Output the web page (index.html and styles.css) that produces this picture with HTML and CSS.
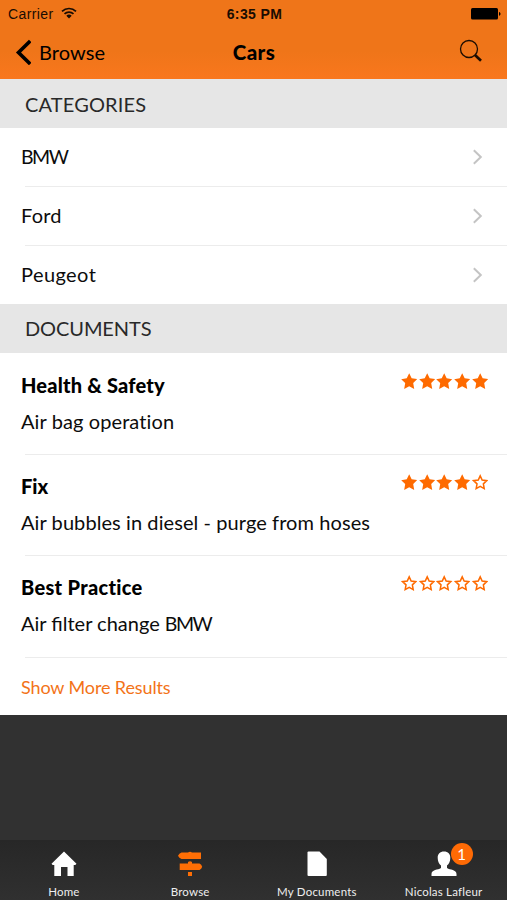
FILE: index.html
```html
<!DOCTYPE html>
<html lang="en">
<head>
<meta charset="utf-8">
<title>Cars</title>
<link rel="stylesheet" href="styles.css">
</head>
<body>
<svg class="defs" width="0" height="0" aria-hidden="true">
  <defs>
    <path id="star" d="M8 .3 10.400 5.200 15.800 6 11.900 9.800 12.900 15.600 8 13 3.100 15.600 4.100 9.800 .2 6 5.600 5.200Z"/>
    <path id="star-outline" d="M8 1.800 9.900 5.900 14.400 6.500 11.100 9.600 11.900 14.200 8 12 4.100 14.200 4.900 9.600 1.600 6.500 6.100 5.900Z"/>
    <path id="chevron" d="M.8 1.300 7.800 8 .8 14.700"/>
  </defs>
</svg>
<div class="app">
  <header class="top">
    <div class="status">
      <span class="carrier">Carrier
        <svg class="wifi" width="16" height="12" viewBox="0 0 16 12"><path d="M1 4.3A10.2 10.2 0 0 1 15 4.3M3.5 6.9A6.5 6.5 0 0 1 12.5 6.9" fill="none" stroke="#190c02" stroke-width="1.7"/><path d="M8 11.5 5.3 8.8A4 4 0 0 1 10.7 8.8Z" fill="#190c02"/></svg>
      </span>
      <span class="time">6:35 PM</span>
      <svg class="battery" width="30" height="12" viewBox="0 0 30 12"><rect width="27" height="11.5" rx="1.5"/><path d="M28 4C30 4.5 30 7.300 28 7.800Z"/></svg>
    </div>
    <nav class="nav">
      <a class="back"><svg width="17" height="26" viewBox="0 0 17 26"><path d="M16.200 2 4.500 13.500 16.200 25" fill="none" stroke="#000" stroke-width="3.600"/></svg><span class="back-text">Browse</span></a>
      <h1 class="title">Cars</h1>
      <svg class="search" width="24" height="24" viewBox="0 0 24 24" fill="none" stroke="#1c0d02"><circle cx="10" cy="10" r="8.500" stroke-width="1.300"/><path d="M16 16 22 21.700" stroke-width="2.700"/></svg>
    </nav>
  </header>
  <main>
    <h2 class="section"><span class="t-cat">CATEGORIES</span></h2>
    <ul class="list">
      <li class="row"><span class="t-bmw">BMW</span><svg class="chev" width="10" height="16"><use href="#chevron"/></svg></li>
      <li class="row"><span class="t-ford">Ford</span><svg class="chev" width="10" height="16"><use href="#chevron"/></svg></li>
      <li class="row"><span class="t-peug">Peugeot</span><svg class="chev" width="10" height="16"><use href="#chevron"/></svg></li>
    </ul>
    <h2 class="section"><span class="t-docs">DOCUMENTS</span></h2>
    <ul class="list">
      <li class="doc">
        <div class="doc-head"><h3 class="t-hs">Health &amp; Safety</h3>
          <div class="stars"><svg viewBox="0 0 16 16"><use href="#star"/></svg><svg viewBox="0 0 16 16"><use href="#star"/></svg><svg viewBox="0 0 16 16"><use href="#star"/></svg><svg viewBox="0 0 16 16"><use href="#star"/></svg><svg viewBox="0 0 16 16"><use href="#star"/></svg></div></div>
        <p class="t-bag">Air bag operation</p>
      </li>
      <li class="doc">
        <div class="doc-head"><h3 class="t-fix">Fix</h3>
          <div class="stars"><svg viewBox="0 0 16 16"><use href="#star"/></svg><svg viewBox="0 0 16 16"><use href="#star"/></svg><svg viewBox="0 0 16 16"><use href="#star"/></svg><svg viewBox="0 0 16 16"><use href="#star"/></svg><svg class="empty" viewBox="0 0 16 16"><use href="#star-outline"/></svg></div></div>
        <p class="t-bub">Air bubbles in diesel - purge from hoses</p>
      </li>
      <li class="doc">
        <div class="doc-head"><h3 class="t-best">Best Practice</h3>
          <div class="stars"><svg class="empty" viewBox="0 0 16 16"><use href="#star-outline"/></svg><svg class="empty" viewBox="0 0 16 16"><use href="#star-outline"/></svg><svg class="empty" viewBox="0 0 16 16"><use href="#star-outline"/></svg><svg class="empty" viewBox="0 0 16 16"><use href="#star-outline"/></svg><svg class="empty" viewBox="0 0 16 16"><use href="#star-outline"/></svg></div></div>
        <p class="t-filter">Air filter change <span class="t-bmw">BMW</span></p>
      </li>
    </ul>
    <a class="more">Show More Results</a>
  </main>
  <footer class="tabs">
    <a class="tab"><svg width="26" height="26" viewBox="0 0 26 26" fill="#fff"><path d="M13 .5 25.500 12.800 24.300 14H22.700V25H16.500V16H10V25H3.300V14H1.700L.5 12.800Z"/></svg><span class="tab-home">Home</span></a>
    <a class="tab"><svg class="sign" width="26" height="26" viewBox="0 0 26 26" fill="#fe6e05"><path d="M11 1.500Q13 0 15 1.500H24V8H4.500Q2 7 1 4.800 2 2.500 4.500 1.500ZM11 12.500V11Q13 9.500 15 11V12.500H22.500Q24.500 13.500 25.200 15.700 24.500 18 22.500 19H2.700V12.500ZM11 21H15V25H11Z"/></svg><span class="tab-browse">Browse</span></a>
    <a class="tab"><svg width="26" height="26" viewBox="0 0 26 26" fill="#fff"><path d="M4.500 .5H15.500L22.800 8V24Q22.800 25 21.800 25H4.500Q3.500 25 3.500 24V1.500Q3.500 .5 4.500 .5Z"/></svg><span class="tab-docs">My Documents</span></a>
    <a class="tab"><span class="person"><svg width="26" height="26" viewBox="0 0 26 26" fill="#fff"><path d="M13 .5C17 .5 19.500 3 19.300 7C19.200 10.500 18 13 16 14.500V17C19 19 25.500 18.500 25.500 23V25H.5V23C.5 18.500 7 19 10 17V14.500C8 13 6.800 10.500 6.700 7C6.500 3 9 .5 13 .5Z"/></svg><span class="badge">1</span></span><span class="tab-user">Nicolas Lafleur</span></a>
  </footer>
</div>
</body>
</html>
```
FILE: styles.css
```css
* { box-sizing: border-box; }
body { margin: 0; font-family: Lato, sans-serif; font-size: 20px; color: #0c0c0c; }
h1, h2, h3, p, ul { margin: 0; padding: 0; list-style: none; font-weight: 400; font-size: inherit; }
svg { display: block; flex: none; }
span, h3, p { white-space: nowrap; }
.defs { position: absolute; }
.app { width: 507px; height: 900px; display: flex; flex-direction: column; overflow: hidden; background: #313131; }
.top { height: 79px; background: linear-gradient(#ef7519 0 65%, #f9771d); }
.status { height: 27px; padding: 0 6px 0 8px; display: grid; grid-template-columns: 1fr auto 1fr; align-items: center; font: 14px/28px "Liberation Sans", sans-serif; color: #190c02; }
.carrier { display: flex; gap: 7px; align-items: center; letter-spacing: .4px; }
.wifi { margin-top: -2px; }
.time { font-weight: 700; letter-spacing: .4px; }
.battery { justify-self: end; }
.nav { height: 50px; padding: 0 24px 0 14px; display: grid; grid-template-columns: 1fr auto 1fr; align-items: center; color: #000; }
.back { display: flex; align-items: center; gap: 8px; }
.back-text { letter-spacing: .1px; }
.title { font-weight: 900; font-size: 20.500px; letter-spacing: .4px; padding-left: 11px; }
.search { justify-self: end; margin-top: -2px; }
main { background: #fff; height: 636px; flex: none; }
.section { height: 49px; line-height: 49px; padding-left: 25px; background: #e6e6e6; color: #292929; }
.section:first-child { line-height: 50px; }
.t-cat { letter-spacing: .15px; }
.t-docs { letter-spacing: -.1px; }
.row { height: 59px; padding: 0 24px 0 21px; display: flex; align-items: center; justify-content: space-between; line-height: 30px; }
.row:first-child { height: 58px; }
.row + .row > span { margin-top: -1px; }
.row + .row, .doc + .doc, .more { background: linear-gradient(#ececec, #ececec) 25px 0 / 100% 1px no-repeat; }
.chev { fill: none; stroke: #c4c4c4; stroke-width: 2; }
.t-bmw { font-size: 19.500px; letter-spacing: -1.500px; }
.t-ford { letter-spacing: .2px; }
.t-peug { letter-spacing: .42px; }
.doc { height: 101.200px; padding: 17px 19px 0 21px; }
.doc-head { display: flex; justify-content: space-between; height: 30px; line-height: 30px; }
.doc h3 { font-weight: 900; color: #000; }
.doc p { line-height: 30px; margin-top: 6px; }
.t-hs { letter-spacing: .2px; }
.t-bub { letter-spacing: .08px; }
.t-bag { letter-spacing: .1px; }
.t-best { letter-spacing: .3px; }
.stars { display: flex; gap: 1.300px; padding-top: 3px; }
.stars svg { width: 16.400px; height: 16.400px; fill: #fe6a00; }
.stars .empty { fill: none; stroke: #fe6a00; stroke-width: 1.500; }
.more { display: block; height: 58.400px; line-height: 60px; padding-left: 21px; font-size: 18px; letter-spacing: -.12px; color: #f37318; }
.tabs { height: 60px; margin-top: auto; display: grid; grid-template-columns: repeat(4, 1fr); background: linear-gradient(#272727, #303030); color: #eee; font-size: 11.500px; }
.tab { display: flex; flex-direction: column; align-items: center; padding-top: 11px; line-height: 14px; gap: 8px; letter-spacing: .2px; }
.tab:first-child { padding-left: 1px; }
.person { position: relative; }
.badge { position: absolute; left: 20px; top: -8px; width: 22px; height: 22px; border-radius: 50%; background: #fe6a05; color: #fff; font-size: 15px; line-height: 23px; text-align: center; }
```
